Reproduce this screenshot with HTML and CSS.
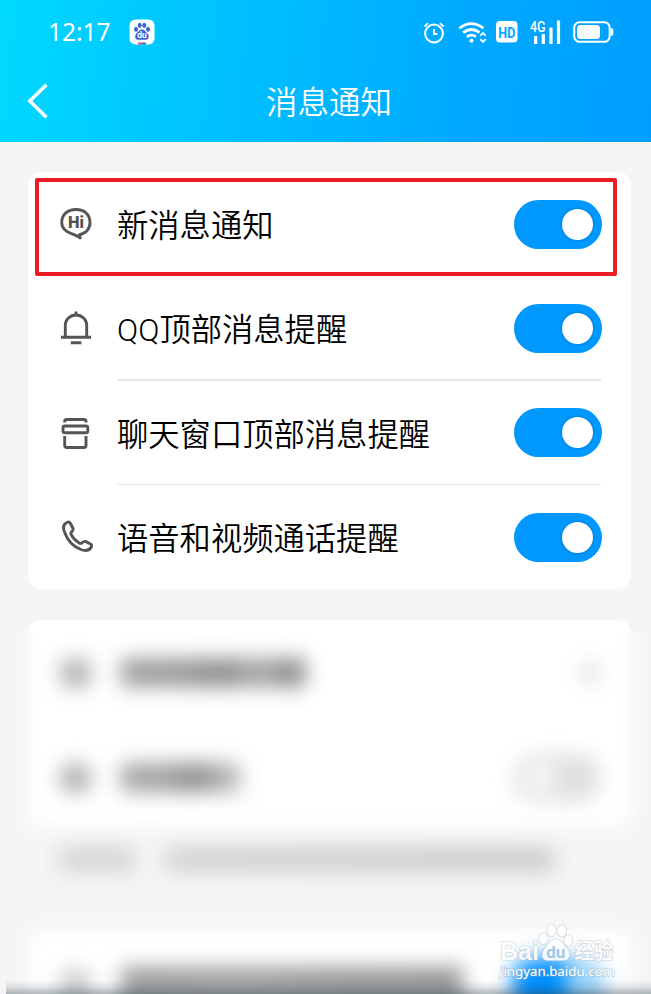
FILE: index.html
```html
<!DOCTYPE html>
<html lang="zh-CN">
<head>
<meta charset="utf-8">
<title>消息通知</title>
<link rel="stylesheet" href="styles.css">
</head>
<body>
<header class="header">
  <div class="status">
    <span class="time">12:17</span>
    <svg class="app" width="26" height="26" viewBox="0 0 26 26">
      <rect x=".5" y=".5" width="25" height="25" rx="6" fill="#fff"/>
      <g fill="#3c64d4"><ellipse cx="7" cy="10.3" rx="2" ry="2.500"/><ellipse cx="10.700" cy="6.3" rx="2" ry="2.600"/><ellipse cx="15.300" cy="6.3" rx="2" ry="2.600"/><ellipse cx="19" cy="10.3" rx="2" ry="2.500"/><path d="M13 10.4c2.500 0 3.200 2 4.900 3.300 2.200 1.700 3.200 7-1.400 7h-7c-4.600 0-3.600-5.300-1.400-7 1.700-1.300 2.400-3.300 4.900-3.300z"/></g>
      <text class="du" x="13" y="18.900" text-anchor="middle">du</text>
      <path d="M9 24.500h4" stroke="#d9535f" stroke-width="2"/><path d="M13 24.500h4" stroke="#3c64d4" stroke-width="2"/>
    </svg>
    <div class="signals">
      <svg width="22" height="24" viewBox="0 0 22 24" fill="none" stroke="#fff" stroke-width="2">
        <circle cx="11" cy="13.500" r="8.900"/><path d="M11 9v5h3.500M1.500 6.500 5 3.200M20.500 6.500 17 3.200" stroke-width="1.800"/>
      </svg>
      <svg class="wifi" width="29" height="24" viewBox="0 0 29 24" fill="none" stroke="#fff" stroke-width="2.700">
        <path d="M1.500 8.200q11.500-9.200 24 0M5.200 12.600q8.300-6.200 16.300 0M8.900 16.800q4.600-3.400 9 0"/>
        <circle cx="13.500" cy="20.800" r="2" fill="#fff" stroke="none"/><path d="m22.300 15.700 2.700-2.700 2.700 2.700M22.300 19.200l2.700 2.700 2.700-2.700" stroke-width="1.900"/>
      </svg>
      <svg class="hd" width="22" height="22" viewBox="0 0 22 22"><rect width="21.500" height="21.500" rx="4" fill="#fff"/><text class="hd-text" x="10.800" y="16.500" textLength="17" lengthAdjust="spacingAndGlyphs" text-anchor="middle">HD</text></svg>
      <svg class="cell" width="32" height="24" viewBox="0 0 32 24"><text class="g4" x="0" y="12" textLength="15.500" lengthAdjust="spacingAndGlyphs">4G</text><path d="M5.700 22.500v-5M13.300 22.500v-7M21 22.500V9M28.500 22.500V2" fill="none" stroke="#fff" stroke-width="3.200" stroke-linecap="square"/></svg>
      <svg class="battery" width="41" height="22" viewBox="0 0 41 22"><rect x="1.200" y="1.200" width="35.500" height="19.600" rx="5.500" fill="none" stroke="#fff" stroke-width="2"/><rect x="4" y="4" width="23" height="14" rx="3.500" fill="#fff"/><path d="M39 7.500v7" stroke="#fff" stroke-width="2.400"/></svg>
    </div>
  </div>
  <div class="nav">
    <svg class="back" width="24" height="38" viewBox="0 0 24 38"><path d="M21.400 2.700 4.800 19l16.600 16.300" fill="none" stroke="#fff" stroke-width="3.500"/></svg>
    <h1 class="title">消息通知</h1>
  </div>
</header>
<main class="content">
  <section class="card">
    <div class="row first">
      <svg class="icon" width="34" height="34" viewBox="0 0 34 34"><path d="M20 28C28 26 31 21.500 31 15.600 31 7 25 2.500 17 2.500S2.700 7 2.700 15.600c0 6.500 5 9.700 10.900 11.600 2.200.7 4.600 2 7.700 3.700z" fill="none" stroke="#555" stroke-width="2.900" stroke-linejoin="round"/><text class="hi" x="17" y="20.900" textLength="16" lengthAdjust="spacingAndGlyphs" text-anchor="middle">Hi</text></svg>
      <span class="label">新消息通知</span><span class="switch"><i class="knob"></i></span>
      <div class="highlight"></div>
    </div>
    <div class="row line">
      <svg class="icon" width="34" height="34" viewBox="0 0 34 34"><path d="M17 .5v4M6.300 26V14.200a10.700 10.200 0 0 1 21.400 0V26M2 26.300h30M11.800 31.700h10.600" fill="none" stroke="#555" stroke-width="2.900"/></svg>
      <span class="label">QQ顶部消息提醒</span><span class="switch"><i class="knob"></i></span>
    </div>
    <div class="row line">
      <svg class="icon" width="34" height="34" viewBox="0 0 34 34"><g fill="none" stroke="#555" stroke-width="2.900"><path d="M5.700 6.500V5.500q0-2 2-2h17.300q2 0 2 2v1"/><rect x="4" y="10" width="24.800" height="6.700" rx="1.700"/><path d="M5.700 20v9.500q0 2 2 2h17.300q2 0 2-2V20"/></g></svg>
      <span class="label">聊天窗口顶部消息提醒</span><span class="switch"><i class="knob"></i></span>
    </div>
    <div class="row">
      <svg class="icon" width="34" height="34" viewBox="0 0 34 34"><path d="M7.900 2.500C4.700 4 3.700 7.500 5.500 12c3 8.500 8.500 14.500 16.300 17.500 4.500 1.700 8.500 1.300 10.500-2.500.8-1.500.2-2.400-1.200-3.200l-4.200-2.200c-1.600-.8-2.500-.1-3.800 1.200-.9.800-2 .7-3.300-.1-3.600-2.200-6.100-5-7.700-8.300-.6-1.300-.2-2 .7-2.800 1.300-1.200 1.700-2.200 1-3.600L11.500 3.500c-.9-1.500-2-1.800-3.600-1z" fill="none" stroke="#555" stroke-width="2.900" stroke-linejoin="round"/></svg>
      <span class="label">语音和视频通话提醒</span><span class="switch"><i class="knob"></i></span>
    </div>
  </section>
  <div class="card-top"></div>
  <section class="obscured" aria-hidden="true">
    <div class="soft">
      <div class="soft-card upper">
        <div class="soft-row"><i class="blob"></i><i class="bar long"></i><i class="chevron"></i></div>
        <div class="soft-row"><i class="blob"></i><i class="bar short"></i><i class="off"><b class="off-knob"></b></i></div>
      </div>
      <div class="note"><i class="note-a"></i><i class="note-b"></i></div>
      <div class="soft-card lower">
        <div class="soft-row"><i class="blob pale"></i><i class="bar wide"></i><i class="on"><b class="on-knob"></b></i></div>
      </div>
    </div>
    <div class="shade"></div>
    <svg class="watermark" width="124" height="66" viewBox="0 0 124 66">
      <g class="mark"><text class="wm-brand" x="5" y="41.500" textLength="39" lengthAdjust="spacingAndGlyphs">Bai</text>
      <ellipse cx="48.500" cy="20.500" rx="4.300" ry="5.700"/><ellipse cx="56.500" cy="12.300" rx="4.300" ry="6"/><ellipse cx="67" cy="13" rx="4.500" ry="5.800"/><ellipse cx="73.300" cy="22.500" rx="4.200" ry="5.500"/>
      <path d="M60.500 21c-5 0-6.500 5-9.500 8.200-5.500 5.300-5 13.300 1.500 13.300h16c7 0 8-8 2.500-13.300-3.200-3.200-5.500-8.200-10.500-8.200z"/>
      <text class="wm-cn" x="79.500" y="40" textLength="39" lengthAdjust="spacingAndGlyphs">经验</text></g>
      <text class="wm-du" x="60.700" y="39.700" text-anchor="middle">du</text>
      <text class="wm-url" x="5" y="58" textLength="115" lengthAdjust="spacingAndGlyphs">jingyan.baidu.com</text>
    </svg>
  </section>
</main>
</body>
</html>
```
FILE: styles.css
```css
* { box-sizing: border-box; }
body { margin: 0; width: 651px; height: 994px; overflow: hidden; background: #f5f5f5; font-family: Roboto, "Noto Sans CJK SC", sans-serif; color: #000; }
svg { display: block; flex: none; }
i, b { display: block; flex: none; }

.header { height: 142px; background: linear-gradient(96deg, #00d9ff 0%, #00c0ff 36%, #00a8ff 72%, #009fff 100%); color: #fff; }
.status { height: 64px; display: flex; align-items: center; padding-left: 48px; }
.time { font-family: "Noto Sans", sans-serif; font-size: 24.500px; letter-spacing: 0; line-height: 30px; width: 81px; }
.du { font: bold 8.500px Roboto, sans-serif; fill: #fff; }
.signals { display: flex; align-items: center; margin-left: 268px; }
.wifi { margin-left: 13px; }
.hd { margin-left: 9px; }
.hd-text { font: bold 15px Roboto, sans-serif; fill: #00a8ff; }
.cell { margin-left: 12px; }
.g4 { font: 500 14px Roboto, sans-serif; fill: #fff; }
.battery { margin-left: 11px; }
.nav { height: 74px; display: flex; align-items: center; padding-left: 25px; }
.title { margin: 0 0 0 217px; padding-top: 6px; font-size: 31.500px; font-weight: 350; line-height: 40px; }

.content { padding-top: 30px; }
.card { width: 603px; height: 417px; margin-left: 28px; padding: 0 29.500px 0 31px; background: #fff; border-radius: 14px; }
.row { position: relative; height: 104.600px; display: flex; align-items: center; }
.first { height: 104px; }
.icon { margin-right: 24px; }
.label { flex: 1; font-size: 31.300px; font-weight: 350; line-height: 44px; white-space: nowrap; padding-top: 6px; }
.line::after { content: ""; position: absolute; left: 58px; right: .500px; bottom: 0; height: 1.500px; background: #e8e8e8; }
.switch { display: flex; align-items: center; justify-content: flex-end; width: 88px; height: 49px; padding-right: 9px; border-radius: 25px; background: #0098ff; }
.knob { width: 31px; height: 31px; border-radius: 50%; background: #fff; box-shadow: 0 0 3px rgba(0,40,90,.4); }
.hi { font: 900 16px Roboto, sans-serif; fill: #555; }
.highlight { position: absolute; left: -24px; top: 6px; width: 582px; height: 98px; border: 4px solid #ed1c24; border-radius: 2px; }

.card-top { width: 603px; height: 12px; margin: 31px 0 0 28px; background: #fff; border-radius: 14px 14px 0 0 / 12px 12px 0 0; }
.obscured { position: relative; height: 362px; margin-left: 6px; overflow: hidden; background: #f5f5f5; }
.soft { margin-top: -30px; filter: blur(10px); }
.soft-card { width: 603px; margin-left: 22px; padding: 0 27px 0 32px; background: #fff; }
.upper { height: 225px; padding-top: 18px; }
.soft-row { height: 105px; display: flex; align-items: center; }
.blob { width: 31px; height: 30px; margin-right: 30px; border-radius: 12px; background: #b2b2b2; }
.pale { background: #c8c8c8; }
.bar { height: 29px; background: linear-gradient(90deg, #a0a0a0, #9c9c9c 30%, #8c8c8c 55%, #a8a8a8 75%, #828282); }
.long { width: 184px; }
.short { width: 120px; background: linear-gradient(90deg, #a8a8a8, #a3a3a3 35%, #8c8c8c 62%, #c5c5c5); }
.wide { width: 342px; height: 36px; background: linear-gradient(90deg, #9c9c9c, #a2a2a2 35%, #9a9a9a 60%, #969696); }
.chevron { width: 14px; height: 22px; margin: 0 7px 0 auto; background: #dedede; }
.off { width: 88px; height: 48px; margin-left: auto; margin-right: 3px; padding: 7px 10px; border-radius: 24px; background: #e0e0e0; }
.off-knob { width: 34px; height: 34px; border-radius: 50%; background: #f6f6f6; }
.note { height: 103px; padding: 20px 0 0 54px; display: flex; }
.note-a, .note-b { width: 74px; height: 25px; background: #d5d5d5; }
.note-b { width: 388px; margin-left: 32px; background: linear-gradient(90deg, #d3d3d3, #cfcfcf 55%, #cdcdcd); }
.lower { height: 180px; }
.lower .soft-row { height: 110px; }
.on { width: 94px; height: 56px; margin-left: auto; margin-right: -1px; padding-left: 56px; overflow: hidden; border-radius: 26px; background: #0090ff; }
.on-knob { width: 38px; height: 56px; background: #9dd5fa; }
.shade { position: absolute; inset: auto 0 0; height: 14px; background: linear-gradient(transparent, rgba(35,55,65,.12) 50%, rgba(35,55,65,.36)); }
.watermark { position: absolute; left: 489px; top: 286px; }
.mark { fill: rgba(255,255,255,.9); stroke: rgba(165,170,177,.5); stroke-width: 1.200px; paint-order: stroke; }
.wm-brand { font: bold 25px "Liberation Sans", sans-serif; }
.wm-cn { font: bold 21px "Noto Sans CJK SC", sans-serif; }
.wm-du { font: bold 17px Roboto, sans-serif; fill: #9ec9e8; }
.wm-url { font: 13px "Noto Sans", sans-serif; fill: #fff; stroke: rgba(155,165,175,.5); stroke-width: 1.300px; paint-order: stroke; }
```
